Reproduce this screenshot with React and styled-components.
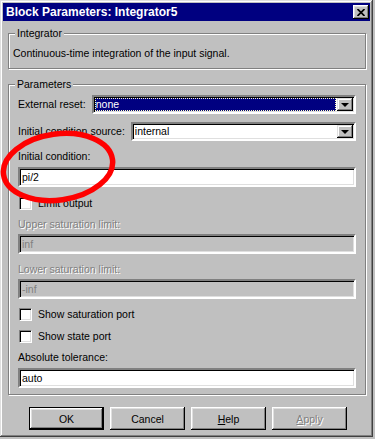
import React from "react";
import styled, { createGlobalStyle } from "styled-components";

const GlobalStyle = createGlobalStyle`
  html, body {
    margin: 0;
    padding: 0;
    background: #c0c0c0;
  }
  body {
    font-family: "Liberation Sans", Arial, sans-serif;
    font-size: 10.5px;
    color: #000;
  }
`;

const App = () => {
  return (
    <>
      <GlobalStyle />
      <Window>
        <TitleBar>
          <Title>Block Parameters: Integrator5</Title>
          <CloseButton>
            <svg width="8" height="7" viewBox="0 0 8 7">
              <path d="M0.5 0 L7.5 7 M7.5 0 L0.5 7" stroke="#000" strokeWidth="1.7" />
            </svg>
          </CloseButton>
        </TitleBar>

        <Body>
          <Group $top={5} $pt={7} $pb={8} $px={4}>
            <Legend $shift={2}>Integrator</Legend>
            <Label>Continuous-time integration of the input signal.</Label>
          </Group>

          <Group $top={8} $pt={4} $pb={6} $px={9}>
            <Legend $shift={-3}>Parameters</Legend>

            <Row>
              <Label>External reset:</Label>
              <Select>
                <SelectValue $selected>none</SelectValue>
                <ArrowButton>
                  <Arrow />
                </ArrowButton>
              </Select>
            </Row>
            <Row $mt={8}>
              <Label>Initial condition source:</Label>
              <Select>
                <SelectValue>internal</SelectValue>
                <ArrowButton>
                  <Arrow />
                </ArrowButton>
              </Select>
            </Row>

            <Label $mt={9}>Initial condition:</Label>
            <Field $mt={4}>pi/2</Field>

            <CheckRow $mt={10}>
              <CheckBox />
              <Label>Limit output</Label>
            </CheckRow>

            <Label $mt={8} $disabled>Upper saturation limit:</Label>
            <Field $mt={3} $disabled>inf</Field>

            <Label $mt={9} $disabled>Lower saturation limit:</Label>
            <Field $mt={3} $disabled>-inf</Field>

            <CheckRow $mt={9}>
              <CheckBox />
              <Label>Show saturation port</Label>
            </CheckRow>
            <CheckRow $mt={9}>
              <CheckBox />
              <Label>Show state port</Label>
            </CheckRow>

            <Label $mt={8}>Absolute tolerance:</Label>
            <Field $mt={4}>auto</Field>
          </Group>

          <ButtonRow>
            <Button $default>OK</Button>
            <Button>Cancel</Button>
            <Button>
              <u>H</u>elp
            </Button>
            <Button $disabled>
              <u>A</u>pply
            </Button>
          </ButtonRow>
        </Body>

        <Annotation width="122" height="90" viewBox="0 0 122 90">
          <ellipse
            cx="58"
            cy="43"
            rx="55"
            ry="33"
            transform="rotate(-8 58 43)"
            fill="none"
            stroke="#ff0000"
            strokeWidth="5.5"
          />
        </Annotation>
      </Window>
    </>
  );
};

const Window = styled.div`
  position: relative;
  width: 373px;
  height: 437px;
  box-sizing: border-box;
  padding: 3px;
  background: #c0c0c0;
  box-shadow: inset -1px -1px 0 #404040, inset 1px 1px 0 #dfdfdf,
    inset -2px -2px 0 #808080, inset 2px 2px 0 #fff;
  display: flex;
  flex-direction: column;
`;

const TitleBar = styled.div`
  height: 18px;
  background: #000080;
  display: flex;
  align-items: center;
  justify-content: space-between;
  padding: 0 1px 0 3px;
`;

const Title = styled.span`
  color: #fff;
  font-weight: bold;
  font-size: 12px;
  line-height: 14px;
`;

const CloseButton = styled.div`
  width: 16px;
  height: 14px;
  box-sizing: border-box;
  background: #c0c0c0;
  display: flex;
  align-items: center;
  justify-content: center;
  box-shadow: inset -1px -1px 0 #000, inset 1px 1px 0 #fff,
    inset -2px -2px 0 #808080, inset 2px 2px 0 #dfdfdf;
`;

const Body = styled.div`
  display: flex;
  flex-direction: column;
  padding: 0 4px 0 5px;
`;

const Group = styled.fieldset`
  margin: ${(p) => p.$top}px 0 0;
  padding: ${(p) => p.$pt}px ${(p) => p.$px}px ${(p) => p.$pb}px;
  border: 1px solid #808080;
  box-shadow: inset 1px 1px 0 #fff, 1px 1px 0 #fff;
  min-width: 0;
  display: flex;
  flex-direction: column;
`;

const Legend = styled.legend`
  margin-left: ${(p) => p.$shift}px;
  padding: 0 2px;
  line-height: 14px;
  background: #c0c0c0;
`;

const Label = styled.div`
  margin-top: ${(p) => p.$mt || 0}px;
  line-height: 13px;
  white-space: nowrap;
  color: ${(p) => (p.$disabled ? "#808080" : "#000")};
  text-shadow: ${(p) => (p.$disabled ? "1px 1px 0 #fff" : "none")};
`;

const Row = styled.div`
  display: flex;
  align-items: center;
  gap: 6px;
  margin-top: ${(p) => p.$mt || 0}px;
`;

const Field = styled.div`
  margin-top: ${(p) => p.$mt || 0}px;
  height: 20px;
  box-sizing: border-box;
  border: 2px solid;
  border-color: #808080 #fff #fff #808080;
  box-shadow: inset 1px 1px 0 #000, inset -1px -1px 0 #dfdfdf;
  background: ${(p) => (p.$disabled ? "#c0c0c0" : "#fff")};
  color: ${(p) => (p.$disabled ? "#808080" : "#000")};
  padding: 0 2px;
  display: flex;
  align-items: center;
  line-height: 13px;
`;

const Select = styled.div`
  flex: 1;
  height: 19px;
  box-sizing: border-box;
  border: 2px solid;
  border-color: #808080 #fff #fff #808080;
  box-shadow: inset 1px 1px 0 #000, inset -1px -1px 0 #dfdfdf;
  background: #fff;
  display: flex;
  align-items: stretch;
  padding: 1px;
`;

const SelectValue = styled.div`
  flex: 1;
  display: flex;
  align-items: center;
  padding-left: 1px;
  margin-right: 1px;
  line-height: 13px;
  background: ${(p) => (p.$selected ? "#000080" : "transparent")};
  color: ${(p) => (p.$selected ? "#fff" : "#000")};
  outline: ${(p) => (p.$selected ? "1px dotted #ffffc0" : "none")};
  outline-offset: -1px;
`;

const ArrowButton = styled.div`
  width: 16px;
  box-sizing: border-box;
  background: #c0c0c0;
  display: flex;
  align-items: center;
  justify-content: center;
  box-shadow: inset -1px -1px 0 #000, inset 1px 1px 0 #dfdfdf,
    inset -2px -2px 0 #808080, inset 2px 2px 0 #fff;
`;

const Arrow = styled.div`
  width: 0;
  height: 0;
  border-left: 4px solid transparent;
  border-right: 4px solid transparent;
  border-top: 4px solid #000;
`;

const CheckRow = styled.div`
  display: flex;
  align-items: center;
  gap: 6px;
  margin-top: ${(p) => p.$mt || 0}px;
  padding-left: 1px;
`;

const CheckBox = styled.div`
  width: 13px;
  height: 13px;
  box-sizing: border-box;
  background: #fff;
  border: 1px solid;
  border-color: #808080 #fff #fff #808080;
  box-shadow: inset 1px 1px 0 #000, inset -1px -1px 0 #dfdfdf;
`;

const ButtonRow = styled.div`
  display: flex;
  gap: 6px;
  margin-top: 12px;
  padding-left: 21px;
`;

const Button = styled.div`
  width: 75px;
  height: 23px;
  box-sizing: border-box;
  display: flex;
  align-items: center;
  justify-content: center;
  background: #c0c0c0;
  color: ${(p) => (p.$disabled ? "#808080" : "#000")};
  text-shadow: ${(p) => (p.$disabled ? "1px 1px 0 #fff" : "none")};
  border: ${(p) => (p.$default ? "1px solid #000" : "none")};
  box-shadow: inset -1px -1px 0 #000, inset 1px 1px 0 #fff,
    inset -2px -2px 0 #808080, inset 2px 2px 0 #dfdfdf;

  u {
    text-decoration: underline;
  }
`;

const Annotation = styled.svg`
  position: absolute;
  left: 0;
  top: 124px;
  pointer-events: none;
`;

export default App;
